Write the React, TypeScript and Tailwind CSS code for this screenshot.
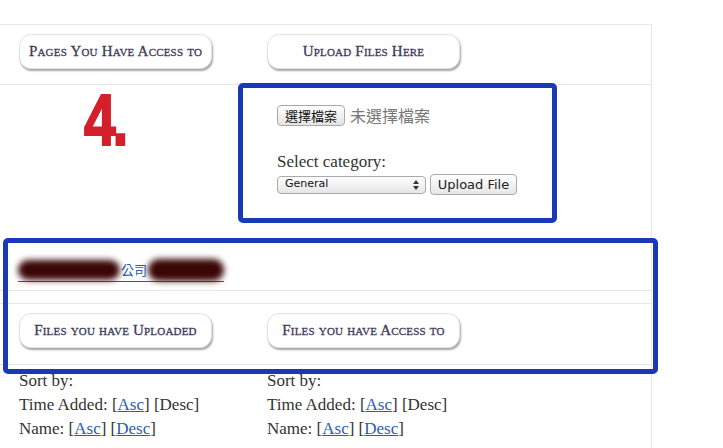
import React from "react";

const NavButton = ({ label }: { label: string }) => (
  <button className="h-[35px] w-[193px] rounded-[12px] border border-[#e2e2e2] bg-white text-[15px] tracking-[0.2px] text-[#3e3a5a] [font-variant:small-caps] [-webkit-text-stroke:0.3px_#3e3a5a] shadow-[1px_2px_2px_rgba(0,0,0,0.35)] [font-family:'Liberation_Serif',serif]">
    {label}
  </button>
);

const SortBlock = () => (
  <div className="w-[248px] text-[17px] leading-[24px] text-[#333]">
    <div>Sort by:</div>
    <div>
      Time Added: [<a className="text-[#2a5db0] underline">Asc</a>] [Desc]
    </div>
    <div>
      Name: [<a className="text-[#2a5db0] underline">Asc</a>] [
      <a className="text-[#2a5db0] underline">Desc</a>]
    </div>
  </div>
);

const App = () => {
  return (
    <div className="h-[448px] w-[723px] overflow-hidden bg-white [font-family:'Liberation_Serif',serif]">
      <div className="h-[24px]" />
      <div className="w-[652px] border-r border-t border-[#e6e6e6]">
        {/* nav row */}
        <div className="flex h-[60px] gap-[55px] border-b border-[#e6e6e6] pl-[19px] pt-[9px]">
          <NavButton label="Pages You Have Access to" />
          <NavButton label="Upload Files Here" />
        </div>

        {/* upload row */}
        <div className="flex h-[153px]">
          <div className="-mt-[2px] w-[238px] pl-[84px]">
            <span className="inline-block origin-left scale-x-[0.78] text-[73px] font-bold leading-none tracking-[-4px] text-[#d4202a] [-webkit-text-stroke:2px_#d4202a] [font-family:'Liberation_Sans',sans-serif]">
              4.
            </span>
          </div>
          <div className="-mt-[2px] h-[140px] w-[319px] rounded-[5px] border-[5px] border-[#1a39b6] pl-[34px] pt-[15px]">
            <div className="flex items-center gap-[5px]">
              <button className="h-[21px] rounded-[4px] border border-[#a8a8a8] bg-gradient-to-b from-white to-[#e4e4e4] px-[7px] text-[13px] leading-none text-[#111] [font-family:'Noto_Sans_CJK_TC',sans-serif]">
                選擇檔案
              </button>
              <span className="text-[16px] text-[#777] [font-family:'Noto_Sans_CJK_TC',sans-serif]">
                未選擇檔案
              </span>
            </div>
            <div className="mt-[23px] text-[17px] leading-[24px] text-[#333]">
              Select category:
            </div>
            <div className="flex items-center gap-[4px] [font-family:'DejaVu_Sans',sans-serif]">
              <div className="flex h-[18px] w-[149px] items-center justify-between rounded-[4px] border border-[#aaa] bg-gradient-to-b from-white to-[#e6e6e6] pl-[7px] pr-[6px] text-[11px] text-[#111]">
                <span>General</span>
                <svg width="6" height="10" viewBox="0 0 6 10">
                  <path d="M0 4 L3 0 L6 4 Z M0 6 L3 10 L6 6 Z" fill="#333" />
                </svg>
              </div>
              <button className="h-[21px] w-[87px] rounded-[4px] border border-[#aaa] bg-gradient-to-b from-white to-[#e6e6e6] text-[13px] leading-none text-[#222]">
                Upload File
              </button>
            </div>
          </div>
        </div>

        {/* company + file tabs, framed by annotation */}
        <div className="relative">
          <div className="flex h-[53px] items-end border-b border-[#e6e6e6] pb-[8px] pl-[18px]">
            <a className="flex items-center border-b border-[#2a5db0] text-[13px] leading-[18px] text-[#2a5db0] [font-family:'Noto_Sans_CJK_TC',sans-serif]">
              <span className="h-[20px] w-[102px] rounded-full bg-[#3a0606] blur-[3px]" />
              <span className="px-[1px]">公司</span>
              <span className="h-[22px] w-[76px] rounded-full bg-[#3a0606] blur-[3px]" />
            </a>
          </div>
          <div className="h-[13px] border-b border-[#e6e6e6]" />
          <div className="flex h-[61px] gap-[55px] border-b border-[#e6e6e6] pl-[19px] pt-[9px]">
            <NavButton label="Files you have Uploaded" />
            <NavButton label="Files you have Access to" />
          </div>
          <div className="pointer-events-none absolute left-[3px] top-0 h-[136px] w-[655px] rounded-[5px] border-[5px] border-[#1a39b6]" />
        </div>

        {/* sorting */}
        <div className="flex h-[90px] pl-[19px] pt-[4px]">
          <SortBlock />
          <SortBlock />
        </div>
      </div>
    </div>
  );
};

export default App;
